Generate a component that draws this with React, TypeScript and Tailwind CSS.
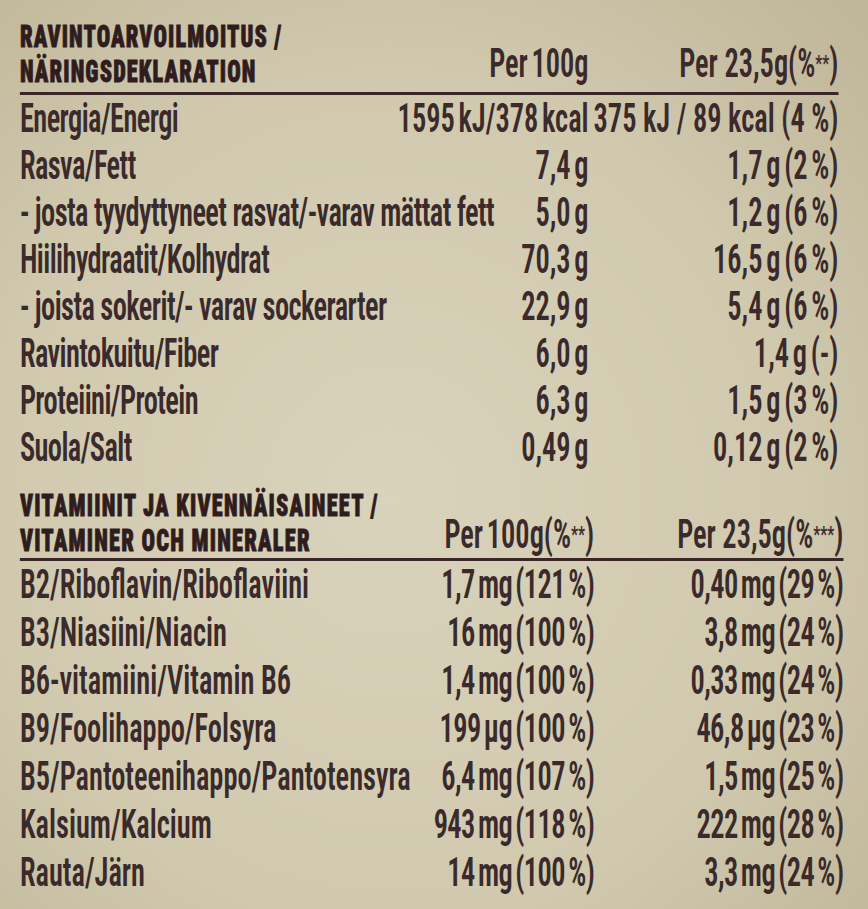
import React from "react";

const rows1: [string, string, string][] = [
  ["Energia/Energi", "1595 kJ/378 kcal", "375 kJ / 89 kcal (4 %)"],
  ["Rasva/Fett", "7,4 g", "1,7 g (2 %)"],
  ["- josta tyydyttyneet rasvat/-varav mättat fett", "5,0 g", "1,2 g (6 %)"],
  ["Hiilihydraatit/Kolhydrat", "70,3 g", "16,5 g (6 %)"],
  ["- joista sokerit/- varav sockerarter", "22,9 g", "5,4 g (6 %)"],
  ["Ravintokuitu/Fiber", "6,0 g", "1,4 g (-)"],
  ["Proteiini/Protein", "6,3 g", "1,5 g (3 %)"],
  ["Suola/Salt", "0,49 g", "0,12 g (2 %)"],
];

const rows2: [string, string, string][] = [
  ["B2/Riboflavin/Riboflaviini", "1,7 mg (121 %)", "0,40 mg (29 %)"],
  ["B3/Niasiini/Niacin", "16 mg (100 %)", "3,8 mg (24 %)"],
  ["B6-vitamiini/Vitamin B6", "1,4 mg (100 %)", "0,33 mg (24 %)"],
  ["B9/Foolihappo/Folsyra", "199 µg (100 %)", "46,8 µg (23 %)"],
  ["B5/Pantoteenihappo/Pantotensyra", "6,4 mg (107 %)", "1,5 mg (25 %)"],
  ["Kalsium/Kalcium", "943 mg (118 %)", "222 mg (28 %)"],
  ["Rauta/Järn", "14 mg (100 %)", "3,3 mg (24 %)"],
];

function Stars({ n }: { n: string }) {
  return <span className="text-[0.55em] align-[0.55em]">{n}</span>;
}

const headCls =
  "flex-1 min-w-0 whitespace-nowrap text-[31.5px] leading-[35px] font-black text-[#2f1d1e] [-webkit-text-stroke:0.9px_#2f1d1e]";

export default function App() {
  return (
    <div className="w-[868px] h-[909px] overflow-hidden bg-[radial-gradient(ellipse_at_45%_55%,#d9d3bc_0%,#d0c9ae_60%,#bfb598_100%)] text-[#3a2a2b] font-['Roboto',sans-serif] [font-stretch:75%]">
      <div className="w-[1223px] origin-left scale-x-[0.71]">
        {/* Section 1 */}
        <div className="pl-[28px] pr-[42px]">
          <div className="flex items-end border-b-[3px] border-[#3a2626] pt-[19px] pb-[3px]">
            <div className={headCls + " tracking-[0.05em]"}>
              <div>RAVINTOARVOILMOITUS /</div>
              <div>NÄRINGSDEKLARATION</div>
            </div>
            <div className="w-[282px] pb-[2px] flex justify-end whitespace-nowrap text-[40px] leading-[47px] font-semibold [word-spacing:-0.1em]">
              Per 100g
            </div>
            <div className="w-[352px] pb-[2px] flex justify-end whitespace-nowrap text-[40px] leading-[47px] font-semibold">
              Per 23,5g(%<Stars n="**" />)
            </div>
          </div>
          {rows1.map(([a, b, c], i) => (
            <div key={a} className="flex h-[47px] items-start text-[40px] leading-[47px] font-semibold whitespace-nowrap">
              <div className="flex-1 min-w-0 tracking-[-0.02em]">{a}</div>
              <div className="w-[282px] flex justify-end [word-spacing:-0.1em]">{b}</div>
              <div className={i === 0 ? "w-[352px] flex justify-end" : "w-[352px] flex justify-end [word-spacing:-0.1em]"}>{c}</div>
            </div>
          ))}
        </div>
        {/* Section 2 */}
        <div className="pl-[28px] pr-[35px]">
          <div className="flex items-end border-b-[3px] border-[#3a2626] pt-[17px]">
            <div className={headCls + " tracking-[0.055em]"}>
              <div>VITAMIINIT JA KIVENNÄISAINEET /</div>
              <div>VITAMINER OCH MINERALER</div>
            </div>
            <div className="w-[310px] flex justify-end whitespace-nowrap text-[40px] leading-[47px] font-semibold [word-spacing:-0.1em]">
              Per 100g(%<Stars n="**" />)
            </div>
            <div className="w-[351px] flex justify-end whitespace-nowrap text-[40px] leading-[47px] font-semibold">
              Per 23,5g(%<Stars n="***" />)
            </div>
          </div>
          {rows2.map(([a, b, c]) => (
            <div key={a} className="flex h-[48px] items-start text-[40px] leading-[48px] font-semibold whitespace-nowrap">
              <div className="flex-1 min-w-0">{a}</div>
              <div className="w-[310px] flex justify-end tracking-[-0.02em] [word-spacing:-0.1em]">{b}</div>
              <div className="w-[351px] flex justify-end tracking-[-0.02em] [word-spacing:-0.1em]">{c}</div>
            </div>
          ))}
        </div>
      </div>
    </div>
  );
}
